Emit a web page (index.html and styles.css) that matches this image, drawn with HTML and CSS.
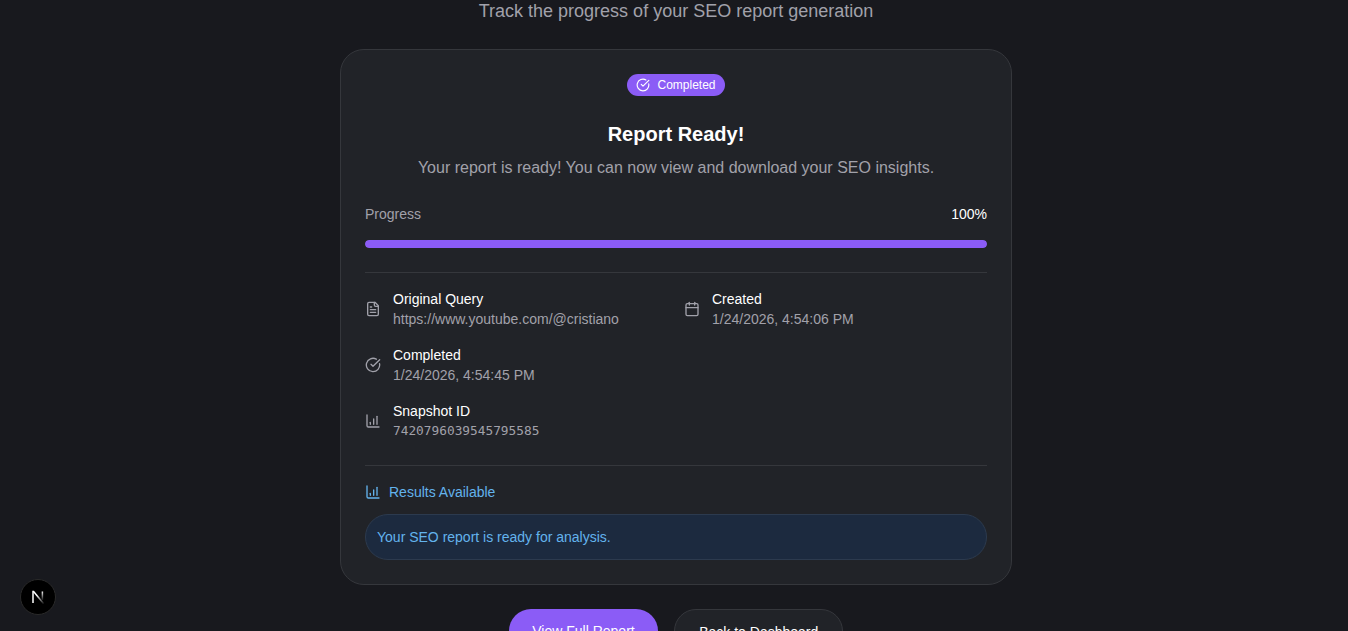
FILE: index.html
```html
<!DOCTYPE html>
<html lang="en">
<head>
  <meta charset="UTF-8">
  <meta name="viewport" content="width=device-width, initial-scale=1.0"/>
  <title>Report Status</title>
  <link rel="stylesheet" href="styles.css">
</head>
<body>
  <main class="page">
    <p class="subtitle">Track the progress of your SEO report generation</p>

    <section class="card">
      <div class="badge-row">
        <span class="badge">
          <svg class="badge-icon" viewBox="0 0 24 24"><path d="M21.8 10A10 10 0 1 1 17 3.3"/><path d="m9 11 3 3L22 4"/></svg>
          Completed
        </span>
      </div>
      <h1 class="title">Report Ready!</h1>
      <p class="desc">Your report is ready! You can now view and download your SEO insights.</p>

      <div class="progress-head">
        <span class="progress-label">Progress</span>
        <span class="progress-value">100%</span>
      </div>
      <div class="progress-track"><div class="progress-fill"></div></div>

      <div class="details">
        <div class="detail">
          <svg class="icon" viewBox="0 0 24 24"><path d="M15 2H6a2 2 0 0 0-2 2v16a2 2 0 0 0 2 2h12a2 2 0 0 0 2-2V7Z"/><path d="M14 2v4a2 2 0 0 0 2 2h4"/><path d="M10 9H8"/><path d="M16 13H8"/><path d="M16 17H8"/></svg>
          <div>
            <div class="detail-label">Original Query</div>
            <div class="detail-value">https://www.youtube.com/@cristiano</div>
          </div>
        </div>
        <div class="detail">
          <svg class="icon" viewBox="0 0 24 24"><path d="M8 2v4"/><path d="M16 2v4"/><rect width="18" height="18" x="3" y="4" rx="2"/><path d="M3 10h18"/></svg>
          <div>
            <div class="detail-label">Created</div>
            <div class="detail-value">1/24/2026, 4:54:06 PM</div>
          </div>
        </div>
        <div class="detail">
          <svg class="icon" viewBox="0 0 24 24"><path d="M21.8 10A10 10 0 1 1 17 3.3"/><path d="m9 11 3 3L22 4"/></svg>
          <div>
            <div class="detail-label">Completed</div>
            <div class="detail-value">1/24/2026, 4:54:45 PM</div>
          </div>
        </div>
        <div class="detail detail-first">
          <svg class="icon" viewBox="0 0 24 24"><path d="M3 3v16a2 2 0 0 0 2 2h16"/><path d="M8 17v-3"/><path d="M13 17V9"/><path d="M18 17V5"/></svg>
          <div>
            <div class="detail-label">Snapshot ID</div>
            <div class="detail-value mono">7420796039545795585</div>
          </div>
        </div>
      </div>

      <div class="results">
        <div class="results-head">
          <svg class="icon" viewBox="0 0 24 24"><path d="M3 3v16a2 2 0 0 0 2 2h16"/><path d="M8 17v-3"/><path d="M13 17V9"/><path d="M18 17V5"/></svg>
          Results Available
        </div>
        <div class="results-box">Your SEO report is ready for analysis.</div>
      </div>
    </section>

    <div class="actions">
      <a class="btn btn-primary" href="#">View Full Report</a>
      <a class="btn btn-outline" href="#">Back to Dashboard</a>
    </div>
  </main>

  <button class="next-badge" aria-label="Next.js dev tools">
    <svg viewBox="0 0 16 16" width="16" height="16">
      <defs>
        <linearGradient id="n-fade-a" x1="4" y1="3" x2="13" y2="14" gradientUnits="userSpaceOnUse">
          <stop offset="0.3" stop-color="#fff"/>
          <stop offset="1" stop-color="#fff" stop-opacity="0.15"/>
        </linearGradient>
        <linearGradient id="n-fade-b" x1="12" y1="2" x2="12" y2="11" gradientUnits="userSpaceOnUse">
          <stop offset="0" stop-color="#fff"/>
          <stop offset="1" stop-color="#fff" stop-opacity="0.1"/>
        </linearGradient>
      </defs>
      <path class="n-left" d="M3 14V2.5h1"/>
      <path class="n-diag" d="M3.6 2.5 13.5 14.5"/>
      <path class="n-right" d="M12.4 2.5V11"/>
    </svg>
  </button>
</body>
</html>
```

FILE: styles.css
```css
* {
  box-sizing: border-box;
}
html, body {
  height: 631px;
  overflow: hidden;
}
body {
  margin: 0;
  background: #18191e;
  font-family: "Liberation Sans", Arial, sans-serif;
  color: #fff;
}
.page {
  display: flex;
  flex-direction: column;
  align-items: center;
  padding-left: 4px;
}
.subtitle {
  margin: 0;
  font-size: 18px;
  line-height: 22px;
  color: #a1a1aa;
}
.card {
  width: 672px;
  margin-top: 27px;
  padding: 24px;
  background: #212328;
  border: 1px solid #35373c;
  border-radius: 24px;
}
.badge-row {
  display: flex;
  justify-content: center;
}
.badge {
  display: inline-flex;
  align-items: center;
  gap: 7px;
  height: 22px;
  padding: 0 9px;
  border-radius: 11px;
  background: #8b5cf6;
  font-size: 12px;
}
.badge-icon {
  width: 14px;
  height: 14px;
  fill: none;
  stroke: #fff;
  stroke-width: 2;
  stroke-linecap: round;
  stroke-linejoin: round;
}
.title {
  margin: 24px 0 0;
  font-size: 20px;
  line-height: 28px;
  text-align: center;
}
.desc {
  margin: 8px 0 0;
  font-size: 16px;
  line-height: 24px;
  text-align: center;
  color: #a1a1aa;
}
.progress-head {
  display: flex;
  justify-content: space-between;
  margin-top: 24px;
  font-size: 14px;
  line-height: 20px;
}
.progress-label {
  color: #a1a1aa;
}
.progress-track {
  height: 8px;
  margin-top: 16px;
  border-radius: 4px;
  background: #35373c;
  overflow: hidden;
}
.progress-fill {
  height: 100%;
  width: 100%;
  border-radius: 4px;
  background: #8b5cf6;
}
.details {
  display: grid;
  grid-template-columns: 1fr 1fr;
  gap: 16px;
  margin-top: 24px;
  padding: 16px 0 24px;
  border-top: 1px solid #35373c;
}
.detail {
  display: flex;
  align-items: center;
  gap: 12px;
}
.detail-first {
  grid-column: 1;
}
.icon {
  flex: none;
  width: 16px;
  height: 16px;
  fill: none;
  stroke: #a1a1aa;
  stroke-width: 2;
  stroke-linecap: round;
  stroke-linejoin: round;
}
.detail-label {
  font-size: 14px;
  line-height: 20px;
}
.detail-value {
  font-size: 14px;
  line-height: 20px;
  color: #a1a1aa;
}
.mono {
  font-family: "DejaVu Sans Mono", monospace;
  font-size: 12.8px;
}
.results {
  padding-top: 16px;
  border-top: 1px solid #35373c;
}
.results-head {
  display: flex;
  align-items: center;
  gap: 8px;
  font-size: 14px;
  line-height: 20px;
  color: #63b3ed;
}
.results-head .icon {
  stroke: #63b3ed;
}
.results-box {
  margin-top: 12px;
  padding: 12px 12px 12px 11px;
  height: 46px;
  font-size: 14px;
  line-height: 20px;
  color: #63b3ed;
  background: #1c2a3f;
  border: 1px solid #2c3a4e;
  border-radius: 23px;
}
.actions {
  display: flex;
  gap: 16px;
  margin-top: 24px;
}
.btn {
  display: block;
  height: 44px;
  padding: 12px 24px;
  border-radius: 22px;
  font-size: 14px;
  line-height: 20px;
  color: #fff;
  text-decoration: none;
}
.btn-primary {
  padding: 12px 23.5px;
  background: #8b5cf6;
}
.btn-outline {
  background: #212328;
  border: 1px solid #35373c;
}
.next-badge {
  position: fixed;
  left: 20px;
  bottom: 16px;
  width: 36px;
  height: 36px;
  padding: 0;
  display: flex;
  align-items: center;
  justify-content: center;
  background: #000;
  border: 1px solid #2a2a2a;
  border-radius: 50%;
}
.n-left,
.n-diag,
.n-right {
  fill: none;
  stroke-width: 1.5;
}
.n-left {
  stroke: #fff;
}
.n-diag {
  stroke: url(#n-fade-a);
}
.n-right {
  stroke: url(#n-fade-b);
}
```
